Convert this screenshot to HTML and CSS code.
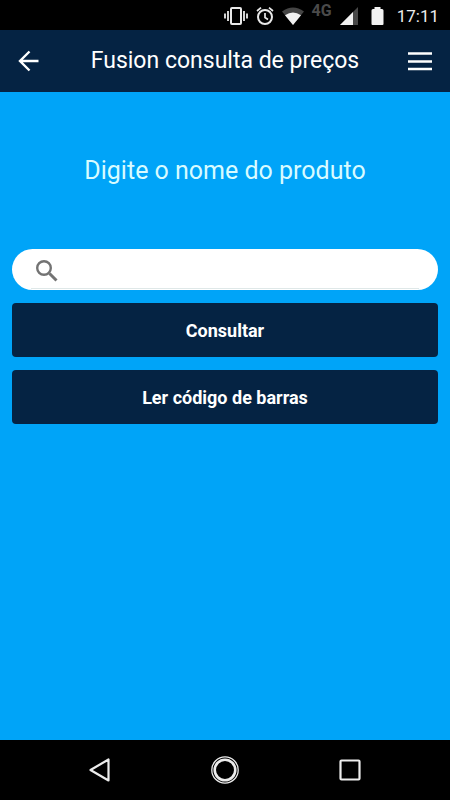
FILE: index.html
```html
<!DOCTYPE html>
<html lang="pt-BR">
<head>
<meta charset="utf-8">
<meta name="viewport" content="width=device-width, initial-scale=1">
<title>Fusion consulta de preços</title>
<link rel="stylesheet" href="styles.css">
</head>
<body>
<div class="status-bar">
  <svg width="24" height="18" viewBox="0 0 24 18" aria-hidden="true">
    <rect x="7" y="1" width="10" height="16" rx="1" fill="none" stroke="#e8e8e8" stroke-width="2"/>
    <path d="M1 6.500v5M4 4v10M20 4v10M23 6.500v5" stroke="#e8e8e8" stroke-width="1.800"/>
  </svg>
  <svg width="18" height="20" viewBox="0 0 18 20" aria-hidden="true">
    <circle cx="9" cy="11" r="7" fill="none" stroke="#e8e8e8" stroke-width="2"/>
    <path d="M9 7v4.500l3 2M1 5l4-3.400M17 5l-4-3.400" fill="none" stroke="#e8e8e8" stroke-width="1.700"/>
  </svg>
  <svg width="22" height="18" viewBox="0 0 22 18" aria-hidden="true">
    <path d="M0 4.500Q11-3.500 22 4.500L11 18z" fill="#454545"/>
    <path d="M3 8.200Q11 2.600 19 8.200L11 18z" fill="#f2f2f2"/>
  </svg>
  <span class="network">4G</span>
  <svg width="18" height="18" viewBox="0 0 18 18" aria-hidden="true">
    <path d="M18 0v18H0z" fill="#484848"/>
    <path d="M13 5v13H0z" fill="#f2f2f2"/>
  </svg>
  <svg width="23" height="18" viewBox="0 0 23 18" aria-hidden="true">
    <path d="M8.500 0h6v2H16q1.500 0 1.500 1.500V17q0 1-1 1H6.500q-1 0-1-1V3.500Q5.500 2 7 2h1.500z" fill="#f2f2f2"/>
  </svg>
  <time class="clock">17:11</time>
</div>

<header class="app-bar">
  <button class="icon-button" type="button" aria-label="Voltar">
    <svg width="24" height="24" viewBox="0 0 24 24" aria-hidden="true">
      <path d="M20.500 12H2M11.500 2.500L2 12l9.500 9.500" fill="none" stroke="#fff" stroke-width="2.400"/>
    </svg>
  </button>
  <h1 class="title">Fusion consulta de preços</h1>
  <button class="icon-button" type="button" aria-label="Menu">
    <svg width="24" height="24" viewBox="0 0 24 24" aria-hidden="true">
      <path d="M0 4.500h24M0 12.500h24M0 20h24" stroke="#fff" stroke-width="2.600"/>
    </svg>
  </button>
</header>

<main class="content">
  <form class="search-form">
    <label class="prompt" for="product">Digite o nome do produto</label>
    <div class="search-box">
      <svg width="22" height="22" viewBox="0 0 22 22" aria-hidden="true">
        <circle cx="8" cy="8" r="6.800" fill="none" stroke="#737373" stroke-width="2.400"/>
        <path d="M13.500 13.500l7 7" stroke="#737373" stroke-width="3"/>
      </svg>
      <input class="search-input" id="product" type="text" autocomplete="off">
    </div>
    <button class="action" type="submit">Consultar</button>
    <button class="action" type="button">Ler código de barras</button>
  </form>
</main>

<nav class="nav-bar" aria-label="Sistema">
  <button class="icon-button" type="button" aria-label="Voltar">
    <svg width="28" height="28" viewBox="0 0 28 28" aria-hidden="true">
      <path d="M22.500 3.500v21L4.500 14z" fill="none" stroke="#ececec" stroke-width="2.200" stroke-linejoin="round"/>
    </svg>
  </button>
  <button class="icon-button" type="button" aria-label="Início">
    <svg width="28" height="28" viewBox="0 0 28 28" aria-hidden="true">
      <circle cx="14" cy="14" r="13.200" fill="none" stroke="#ececec" stroke-width="1.300"/>
      <circle cx="14" cy="14" r="10.300" fill="none" stroke="#ececec" stroke-width="2.600"/>
    </svg>
  </button>
  <button class="icon-button" type="button" aria-label="Recentes">
    <svg width="28" height="28" viewBox="0 0 28 28" aria-hidden="true">
      <rect x="4.500" y="4.500" width="19" height="19" rx="1" fill="none" stroke="#ececec" stroke-width="2.200"/>
    </svg>
  </button>
</nav>
</body>
</html>
```
FILE: styles.css
```css
* {
  box-sizing: border-box;
}

body {
  margin: 0;
  min-height: 100vh;
  display: flex;
  flex-direction: column;
  background: #00a4f8;
  color: #fff;
  font-family: Roboto, "Liberation Sans", sans-serif;
}

svg {
  display: block;
  flex: none;
}

.status-bar {
  display: flex;
  align-items: center;
  justify-content: flex-end;
  gap: 8px;
  height: 30px;
  padding: 1px 11px 0;
  background: #000;
}

.network {
  align-self: flex-start;
  padding-top: 1px;
  color: #4a4a4a;
  font-size: 16px;
  font-weight: 700;
  line-height: 18px;
}

.clock {
  color: #ececec;
  font-size: 17px;
  line-height: 28px;
}

.app-bar {
  display: flex;
  align-items: center;
  height: 62px;
  padding: 0 10px;
  background: #052343;
}

.icon-button {
  display: flex;
  padding: 8px;
  border: 0;
  background: none;
}

.title {
  flex: 1;
  margin: 0;
  font-size: 23px;
  font-weight: 400;
  line-height: 32px;
  text-align: center;
}

.content {
  flex: 1;
  padding: 63px 12px 24px;
}

.search-form {
  display: flex;
  flex-direction: column;
  gap: 13px;
}

.prompt {
  margin-bottom: 49px;
  color: #d8fbff;
  font-size: 25px;
  line-height: 32px;
  text-align: center;
}

.search-box {
  display: flex;
  align-items: center;
  gap: 12px;
  height: 41px;
  padding: 2px 19px 0 24px;
  border-radius: 21px;
  background: linear-gradient(#dfe8e8, #dfe8e8) center bottom 1px / calc(100% - 38px) 1px no-repeat #fff;
}

.search-input {
  flex: 1;
  min-width: 0;
  padding: 0;
  border: 0;
  outline: 0;
  background: none;
  color: #333;
  font: inherit;
  font-size: 18px;
}

.action {
  height: 54px;
  padding: 0 16px;
  border: 0;
  border-radius: 4px;
  background: #052343;
  color: #fff;
  font: inherit;
  font-size: 18px;
  font-weight: 700;
}

.nav-bar {
  display: flex;
  align-items: center;
  justify-content: center;
  gap: 81px;
  height: 60px;
  background: #000;
}
```
